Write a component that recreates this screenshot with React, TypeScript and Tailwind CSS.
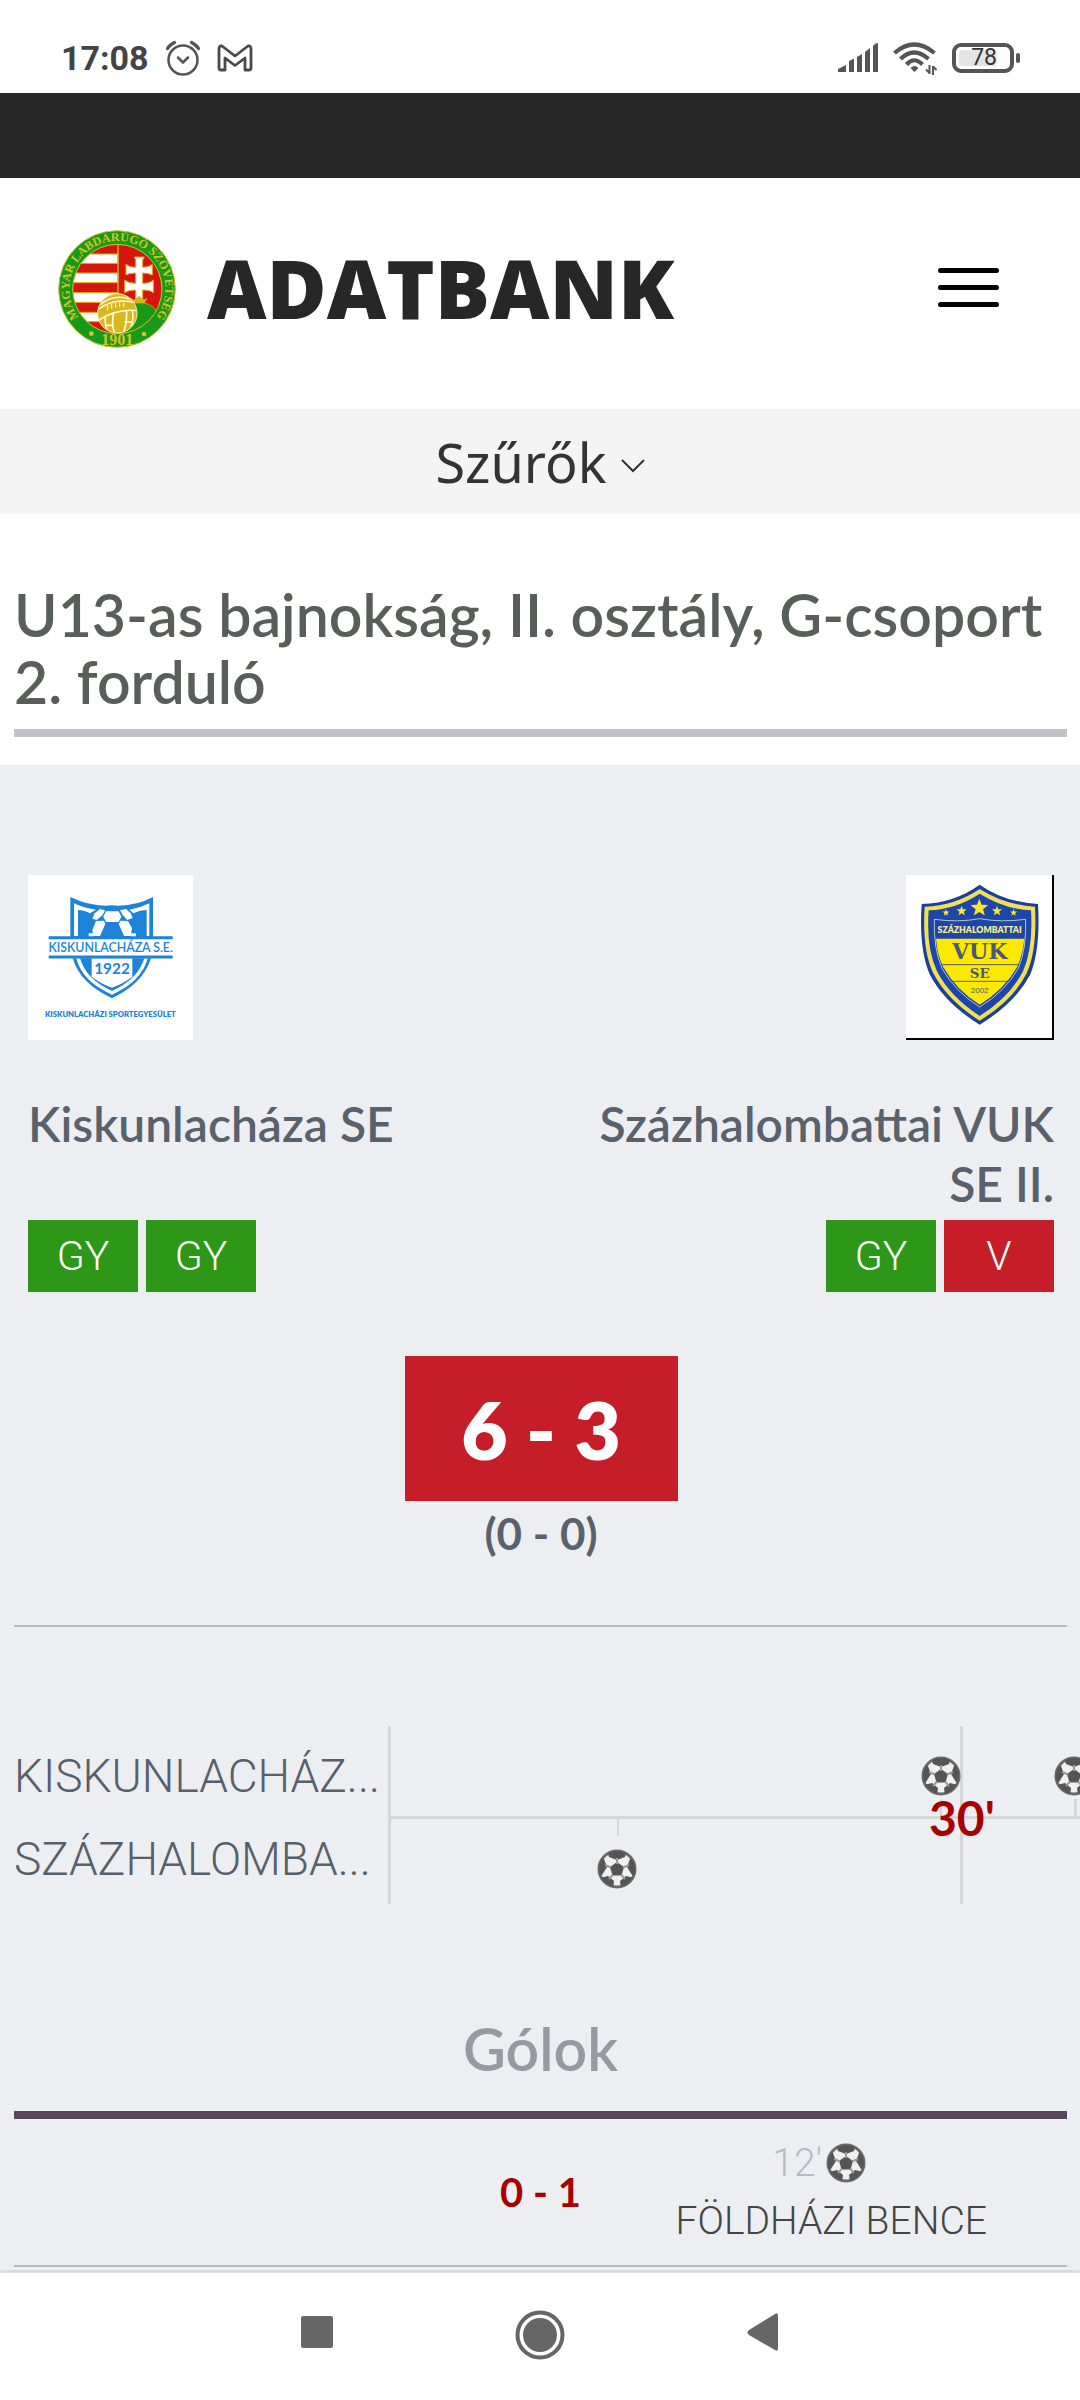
const navIcon = "block fill-[#666666]";

const StatusBar = () => {
    return (
        <div className="flex items-center justify-between h-[93px] pt-[22px] pl-[61px] pr-[60px] bg-white">
            <div className="flex items-center gap-4">
                <span className="font-['Roboto',sans-serif] font-bold text-[34px] leading-10 text-[#444444]">17:08</span>
                <svg className="w-9 h-9" viewBox="0 0 36 36" fill="none" stroke="#555555" strokeWidth="2.5" strokeLinecap="round" strokeLinejoin="round">
                    <circle cx="18" cy="20" r="14.5"/>
                    <path d="M13 17.5l5 5 5-5"/>
                    <path d="M2.500 8.500Q4.500 5 9.500 2.500M33.500 8.500Q31.500 5 26.500 2.500" strokeWidth="3.200"/>
                </svg>
                <svg className="w-9 h-7" viewBox="0 0 36 28" fill="none" stroke="#4a4a4a" strokeWidth="2.8" strokeLinejoin="round">
                    <path d="M2 24V5Q2 1.500 5 2L18 12 31 2Q34 1.500 34 5V24Q34 26 32 26H28V14L18 21.500 8 14V26H4Q2 26 2 24Z"/>
                </svg>
            </div>
            <div className="flex items-center gap-[15px]">
                <svg className="w-10 h-[29px]" viewBox="0 0 40 29" fill="#555555">
                    <path d="M0 29V26L8 22V29ZM11 29V18L16 15.500V29ZM19 29V14L24 11V29ZM27 29V9L32 5V29ZM35 29V3Q37 0 40 0V29Z"/>
                </svg>
                <svg className="w-11 h-[34px]" viewBox="0 0 44 34" fill="none" stroke="#555555" strokeWidth="4.2">
                    <path d="M1.500 12Q21 -5 41.500 12"/>
                    <path d="M7.500 18Q21 5 35.500 18"/>
                    <path d="M13.500 23.500Q21 15 29.500 23.500"/>
                    <path d="M17.500 27Q21.500 23 25.500 27L21.500 31Z" fill="#555555" stroke="none"/>
                    <path d="M36.500 24V33M36.500 32L33 28.500M40 34V25M40 25.500L43.500 29" strokeWidth="2"/>
                </svg>
                <div className="flex items-center gap-[2px]">
                    <div className="flex w-[62px] h-[30px] p-[3px] rounded-[9px] border-4 border-[#555555]">
                        <span className="flex items-center justify-end w-[38px] rounded-sm bg-[#e4e4e4] font-['Roboto',sans-serif] text-[23px] leading-4 text-[#333333]">78</span>
                    </div>
                    <div className="w-1 h-[10px] rounded-sm bg-[#555555]"/>
                </div>
            </div>
        </div>
    );
}

const FederationLogo = () => {
    return (
        <svg className="w-[118px] h-[118px]" viewBox="23 16 354 354" role="img" aria-label="MLSZ">
            <defs>
                <clipPath id="shield"><circle cx="201" cy="193" r="133"/></clipPath>
                <clipPath id="ball"><circle cx="201" cy="266" r="57"/></clipPath>
                <path id="ring" d="M107 302A144 144 0 1 1 295 302"/>
            </defs>
            <circle cx="200" cy="193" r="175" fill="#189a18" stroke="#c8c832" strokeWidth="3"/>
            <g clipPath="url(#shield)">
                <rect x="60" y="50" width="280" height="290" fill="#d5160c"/>
                <g fill="#ffffff" stroke="#e9a520" strokeWidth="3">
                    <rect x="50" y="88" width="153" height="28"/>
                    <rect x="50" y="145" width="153" height="29"/>
                    <rect x="50" y="204" width="153" height="29"/>
                    <rect x="50" y="263" width="153" height="28"/>
                </g>
                <path d="M203 50V220" stroke="#c8b820" strokeWidth="4"/>
                <path d="M252 97H282L277 106V128Q295 128 306 119V151Q295 145 277 145V176Q300 176 309 166V204Q300 196 277 196V222H256V196Q234 196 223 204V166Q234 176 256 176V145Q236 145 227 151V119Q236 128 256 128V106Z" fill="#ffffff" stroke="#e9a520" strokeWidth="3"/>
                <path d="M220 330V262Q225 240 252 234H278Q306 240 318 258L345 270V340Z" fill="#189a18" stroke="#c8c832" strokeWidth="2"/>
                <path d="M238 217L250 225 266 214 282 225 292 219 282 236H250Z" fill="#d5b51c"/>
            </g>
            <circle cx="201" cy="193" r="134" fill="none" stroke="#c8c832" strokeWidth="3"/>
            <circle cx="201" cy="266" r="59" fill="#d9b81f" stroke="#fff4b0" strokeWidth="3"/>
            <g clipPath="url(#ball)" fill="none" stroke="#fffbe0" strokeWidth="5">
                <path d="M140 258Q190 215 262 236M140 290Q195 250 264 258M150 240Q190 205 245 225"/>
                <path d="M165 275Q162 305 176 330M190 264Q182 300 194 330M228 256Q232 290 218 330M246 258Q252 290 240 310M165 302H185M222 292H248"/>
                <path d="M172 243v14M184 238v14M196 235v14M208 233v14M220 233v14" strokeWidth="3"/>
            </g>
            <text className="font-['Liberation_Serif',serif] font-bold" fontSize="36" fill="#d2c42a" textAnchor="middle">
                <textPath href="#ring" startOffset="50%">MAGYAR LABDARÚGÓ SZÖVETSÉG</textPath>
            </text>
            <text className="font-['Liberation_Serif',serif] font-bold" x="201" y="360" fontSize="48" fill="#d2c42a" textAnchor="middle">1901</text>
            <circle cx="123" cy="327" r="7" fill="#d2c42a"/>
            <circle cx="281" cy="328" r="7" fill="#d2c42a"/>
        </svg>
    );
}

const KiskunCrest = () => {
    return (
        <svg className="w-[165px] h-[165px] bg-white" viewBox="84 45 495 495" role="img" aria-label="Kiskunlacháza SE">
            <path d="M211 111Q275 142 335 136Q400 142 459 111V232H211Z" fill="#1c83d8"/>
            <path d="M222 130Q250 144 288 149L270 160Q250 150 234 150V228H222Z" fill="#ffffff"/>
            <path d="M448 130Q420 144 388 149L400 160Q420 150 440 150V228H448Z" fill="#ffffff"/>
            <g fill="#ffffff">
                <path d="M300 147L315 151 308 165 290 180 277 176 284 160Z"/>
                <path d="M360 151L378 147 392 160 398 174 382 180 368 165Z"/>
                <path d="M318 154H356L364 170 356 186H318L310 170Z"/>
                <path d="M288 183L312 182 316 192 300 228H280L277 210Z"/>
                <path d="M362 182L384 183 396 205 392 228H372L356 192Z"/>
                <path d="M266 220H282V232H266ZM392 220H408V232H392Z"/>
            </g>
            <path d="M218 295H453Q430 370 336 415Q240 370 218 295Z" fill="#1c83d8"/>
            <path d="M229 295H240Q258 358 336 393Q414 358 433 295H443Q425 365 336 404Q246 365 229 295Z" fill="#ffffff"/>
            <path d="M275 295H397V350Q375 368 336 383Q300 370 275 350Z" fill="#ffffff"/>
            <path d="M146 233H518M146 291H518" stroke="#1c83d8" strokeWidth="9"/>
            <g className="font-['Lato',sans-serif]" fill="#1c83d8" textAnchor="middle">
                <text x="332" y="277" fontSize="37" fontWeight="600">KISKUNLACHÁZA S.E.</text>
                <text x="336" y="342" fontSize="46" fontWeight="700">1922</text>
                <text x="331" y="470" fontSize="23" fontWeight="800">KISKUNLACHÁZI SPORTEGYESÜLET</text>
            </g>
        </svg>
    );
}

const Star = ({ x, y, r }: { x: number; y: number; r: number }) => {
    const points = Array.from({ length: 10 }, (_, i) => {
        const d = i % 2 ? r * 0.42 : r;
        const a = (Math.PI / 5) * i - Math.PI / 2;
        return `${x + d * Math.cos(a)},${y + d * Math.sin(a)}`;
    }).join(" ");
    return <polygon points={points} fill="#f8e72c"/>;
}

const VukCrest = () => {
    return (
        <svg className="w-[148px] h-[165px] bg-white border-r-2 border-b-2 border-black" viewBox="78 45 438 489" role="img" aria-label="Százhalombattai VUK SE II.">
            <path d="M299 74Q370 125 474 132Q482 270 450 345Q405 430 299 494Q195 430 150 345Q116 270 125 132Q225 128 299 74Z" fill="#1c3f9a"/>
            <path d="M299 87Q375 135 465 140Q472 270 440 340Q398 422 299 482Q203 422 160 340Q126 270 134 140Q225 137 299 87Z" fill="#efe05a"/>
            <path d="M299 101Q375 148 453 151Q460 265 429 334Q390 410 299 468Q210 410 171 334Q138 265 146 151Q228 148 299 101Z" fill="#1e45a8"/>
            <path d="M163 178Q235 188 299 176Q365 188 437 178Q440 265 415 325Q375 395 299 441Q225 395 186 325Q160 265 163 178Z" fill="#1e45a8" stroke="#b9c4cf" strokeWidth="3"/>
            <path d="M168 236H433Q428 285 411 322Q372 390 299 434Q228 390 190 322Q172 285 168 236Z" fill="#fde800"/>
            <path d="M186 314H414M214 364H384" stroke="#59604a" strokeWidth="3"/>
            <Star x={298} y={144} r={28}/>
            <Star x={245} y={153} r={16}/>
            <Star x={351} y={153} r={16}/>
            <Star x={198} y={158} r={11}/>
            <Star x={401} y={158} r={11}/>
            <g textAnchor="middle">
                <text className="font-['Lato',sans-serif]" x="299" y="218" fontSize="26" fontWeight="800" fill="#f5ee90">SZÁZHALOMBATTAI</text>
                <g className="font-['DejaVu_Serif',serif]" fill="#4a5878">
                    <text x="299" y="297" fontSize="66" fontWeight="700">VUK</text>
                    <text x="299" y="353" fontSize="40" fontWeight="700">SE</text>
                    <text className="font-['Liberation_Sans',sans-serif]" x="299" y="400" fontSize="24">2002</text>
                </g>
            </g>
        </svg>
    );
}

const Ball = () => {
    return (
        <svg className="w-10 h-10 shrink-0" viewBox="0 0 40 40" role="img" aria-label="gól">
            <defs>
                <clipPath id="goal"><circle cx="20" cy="20" r="18"/></clipPath>
            </defs>
            <circle cx="20" cy="20" r="18" fill="#f0f0f0" stroke="#6a6a6a" strokeWidth="3"/>
            <g clipPath="url(#goal)" fill="#555555">
                <path d="M20 13L27 18 24.500 26.500H15.500L13 18Z"/>
                <path d="M10 1H30L28 8 20 11 12 8Z"/>
                <path d="M0 8L7 10 10 18 5 26 0 27Z"/>
                <path d="M40 8L33 10 30 18 35 26 40 27Z"/>
                <path d="M3 29L11 27 17 32 16 40H8Z"/>
                <path d="M37 29L29 27 23 32 24 40H32Z"/>
            </g>
            <path d="M20 9V15M26 18.500L32 16M24 25.500L28 30M16 25.500L12 30M14 18.500L8 16" stroke="#999999" strokeWidth="2"/>
        </svg>
    );
}

const Result = ({ win }: { win?: boolean }) => {
    return (
        <span className={`flex items-center justify-center w-[110px] h-[72px] font-['Roboto',sans-serif] font-light text-[41px] leading-none text-white ${win ? "bg-[#2d9818]" : "bg-[#c51e28]"}`}>
            {win ? "GY" : "V"}
        </span>
    );
}

const Timeline = () => {
    return (
        <div className="flex mt-[99px]">
            <div className="w-[388px] shrink-0 pt-[9px] pl-[14px] font-['Roboto',sans-serif] font-light text-[46px] leading-[83px] text-[#56606a] whitespace-nowrap">
                <div>KISKUNLACHÁZ...</div>
                <div>SZÁZHALOMBA...</div>
            </div>
            <div className="relative flex-1 h-[178px] border-l-3 border-[#d6d6d6] overflow-hidden">
                <div className="absolute left-0 right-0 top-[90px] h-[3px] bg-[#d6d6d6]"/>
                <div className="absolute left-[569px] inset-y-0 w-[3px] bg-[#d6d6d6]"/>
                <div className="absolute left-[226px] top-[93px] w-[2px] h-[17px] bg-[#d6d6d6]"/>
                <div className="absolute left-[549px] top-[73px] w-[2px] h-[17px] bg-[#d6d6d6]"/>
                <div className="absolute left-[683px] top-[73px] w-[3px] h-[17px] bg-[#d6d6d6]"/>
                <div className="absolute left-[206px] top-[123px]"><Ball/></div>
                <div className="absolute left-[530px] top-[30px]"><Ball/></div>
                <div className="absolute left-[663px] top-[30px]"><Ball/></div>
                <div className="absolute left-[538px] top-[62px] font-bold text-[48px] leading-[60px] text-[#a80000]">30'</div>
            </div>
        </div>
    );
}

const App = () => {
    return (
        <div className="flex flex-col min-h-screen bg-[#edeef2] font-['Lato',sans-serif] overflow-x-hidden">
            <StatusBar/>
            <div className="h-[85px] bg-[#272727]"/>
            <header className="flex items-center justify-between pt-[52px] pb-[61px] pl-[58px] pr-[81px] bg-white">
                <a href="#" className="flex items-center gap-[31px]">
                    <FederationLogo/>
                    <span className="pb-1 font-['Open_Sans',sans-serif] font-extrabold text-[82px] leading-[110px] text-[#272727]">ADATBANK</span>
                </a>
                <button type="button" aria-label="Menü" className="flex flex-col gap-3 pb-1">
                    <span className="w-[61px] h-[5px] rounded-full bg-black"/>
                    <span className="w-[61px] h-[5px] rounded-full bg-black"/>
                    <span className="w-[61px] h-[5px] rounded-full bg-black"/>
                </button>
            </header>
            <button type="button" className="flex items-center justify-center gap-[14px] w-full h-[105px] bg-[#f4f4f4] font-['Noto_Sans',sans-serif] text-[54px] leading-[72px] text-[#333333]">
                Szűrők
                <svg className="w-6 h-[14px] mt-2" viewBox="0 0 24 14" fill="none" stroke="#333333" strokeWidth="2">
                    <path d="M1 1l11 11L23 1"/>
                </svg>
            </button>
            <div className="pl-[14px] pr-[13px] pt-[67px] pb-7 bg-white">
                <h1 className="pb-[14px] border-b-8 border-[#bfc3c8] font-semibold text-[59px] leading-[67px] text-[#575f58]">
                    U13-as bajnokság, II. osztály, G-csoport
                    <br/>
                    2. forduló
                </h1>
            </div>
            <main className="flex-1">
                <div className="ml-[14px] mr-[13px] pl-[14px] pr-[13px] pt-[110px] pb-[62px] border-b-2 border-[#b5babf] text-[#59626c]">
                    <div className="flex justify-between">
                        <div className="w-1/2 flex flex-col items-start">
                            <KiskunCrest/>
                            <h2 className="mt-[54px] min-h-[120px] font-semibold text-[48px] leading-[60px]">Kiskunlacháza SE</h2>
                            <div className="flex gap-2 mt-[6px]">
                                <Result win/>
                                <Result win/>
                            </div>
                        </div>
                        <div className="w-1/2 flex flex-col items-end">
                            <VukCrest/>
                            <h2 className="mt-[54px] min-h-[120px] font-semibold text-[48px] leading-[60px] text-right">Százhalombattai VUK<br/>SE II.</h2>
                            <div className="flex gap-2 mt-[6px]">
                                <Result win/>
                                <Result/>
                            </div>
                        </div>
                    </div>
                    <div className="flex flex-col items-center mt-16">
                        <div className="flex items-center justify-center w-[273px] h-[145px] bg-[#c51e28] font-extrabold text-[80px] leading-none text-white">6 - 3</div>
                        <div className="mt-[2px] font-bold text-[44px] leading-[60px]">(0 - 0)</div>
                    </div>
                </div>
                <Timeline/>
                <section className="ml-[14px] mr-[13px] mt-[111px]">
                    <h2 className="pb-7 border-b-8 border-[#57465c] text-center font-semibold text-[59px] leading-[68px] text-[#979aa1]">Gólok</h2>
                    <div className="grid grid-cols-[1fr_110px_1fr] items-center pt-[15px] pb-[15px] border-b-2 border-[#b5bac2]">
                        <div/>
                        <div className="text-center font-bold text-[40px] leading-[58px] text-[#a80000]">0 - 1</div>
                        <div className="font-['Roboto',sans-serif] font-light text-[39px] leading-[58px] text-center">
                            <div className="flex items-center justify-center gap-1 pr-6 text-[#b4bdc4]">
                                12'<Ball/>
                            </div>
                            <div className="text-[#444444]">FÖLDHÁZI BENCE</div>
                        </div>
                    </div>
                </section>
            </main>
            <nav className="flex items-center justify-center gap-[174px] h-[130px] pb-1 border-t-3 border-[#dcdcdc] bg-white">
                <button type="button" aria-label="Alkalmazások">
                    <svg className={`w-12 h-12 ${navIcon}`} viewBox="0 0 48 48"><rect x="8" y="5" width="32" height="32" rx="2"/></svg>
                </button>
                <button type="button" aria-label="Kezdőlap">
                    <svg className={`w-[50px] h-[50px] ${navIcon}`} viewBox="0 0 50 50">
                        <circle cx="25" cy="25" r="17"/>
                        <circle cx="25" cy="25" r="22.500" fill="none" stroke="#666666" strokeWidth="4"/>
                    </svg>
                </button>
                <button type="button" aria-label="Vissza">
                    <svg className={`w-12 h-12 ${navIcon}`} viewBox="0 0 48 48"><path d="M39 5V37Q39 41 36 39L10 24Q7 21.500 10 19L36 3Q39 1 39 5Z"/></svg>
                </button>
            </nav>
        </div>
    );
}

export default App;
